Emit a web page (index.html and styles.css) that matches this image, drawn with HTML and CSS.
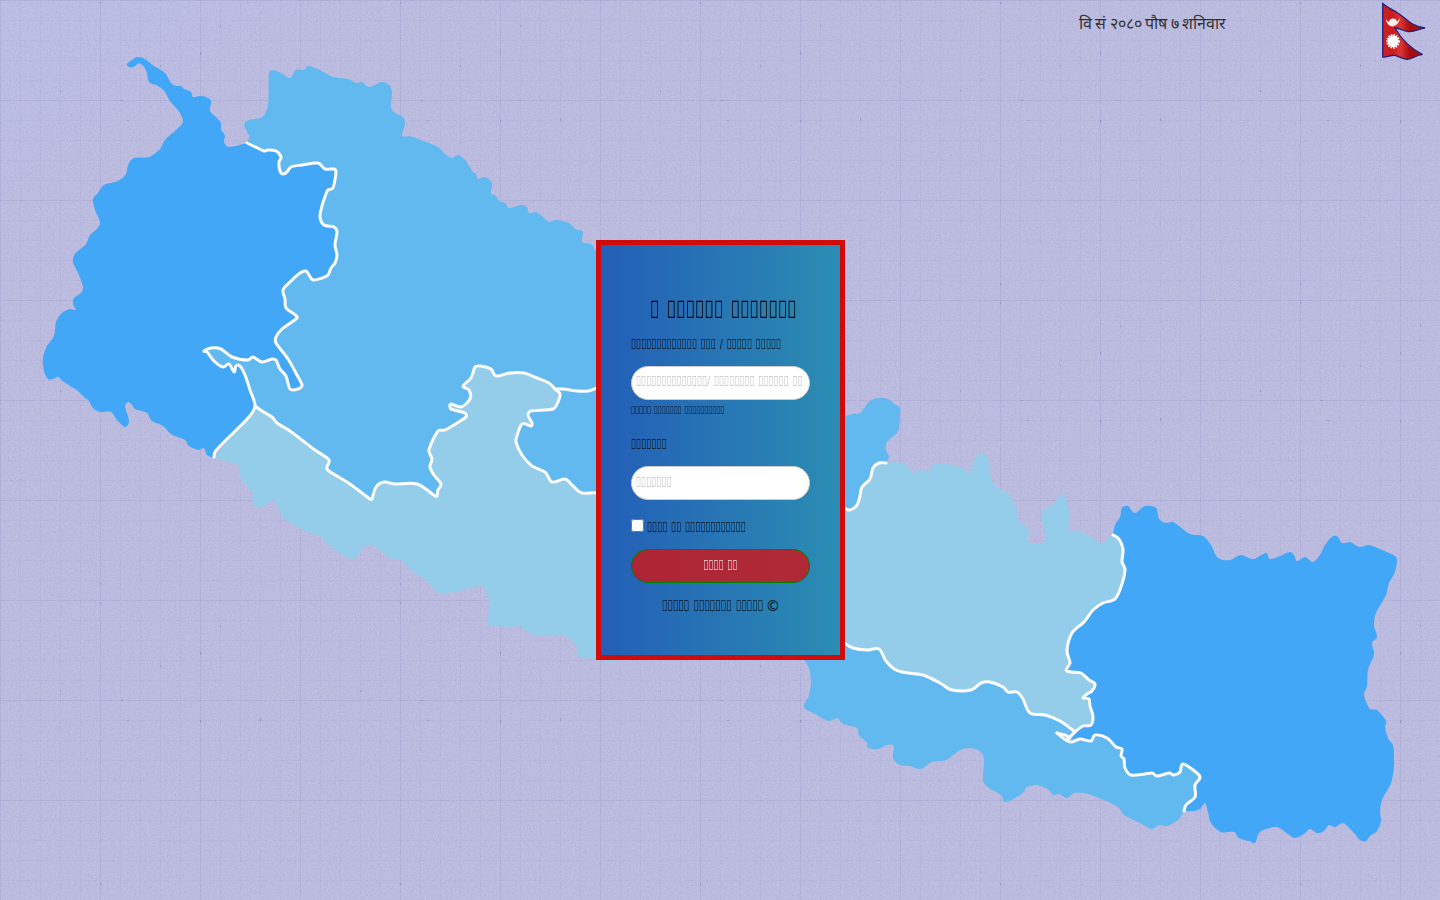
FILE: index.html
```html
<!DOCTYPE html>
<html>
<head>
<meta charset="utf-8">
<title>Login</title>
<link rel="stylesheet" href="styles.css">
</head>
<body>
<svg class="backdrop" width="1440" height="900" viewBox="0 0 1440 900" aria-hidden="true">
  <defs>
    <filter id="paper" x="0" y="0" width="100%" height="100%" color-interpolation-filters="sRGB">
      <feTurbulence type="fractalNoise" baseFrequency="0.6" numOctaves="2" seed="4" stitchTiles="stitch"/>
      <feColorMatrix values="0 0 0 0 .52  0 0 0 0 .52  0 0 0 0 .74  .36 0 0 0 -.12"/>
    </filter>
    <linearGradient id="tint" x1="0" y1="0" x2="1" y2="1">
      <stop offset="0" stop-color="#bfc1e5"/><stop offset=".15" stop-color="#bfbfe2"/><stop offset="1" stop-color="#bfbfe2"/>
    </linearGradient>
    <pattern id="grid" width="300" height="300" patternUnits="userSpaceOnUse">
      <path class="fine" d="M20.5 0V300M40.5 0V300M60.5 0V300M80.5 0V300M120.5 0V300M140.5 0V300M160.5 0V300M180.5 0V300M220.5 0V300M240.5 0V300M260.5 0V300M280.5 0V300M0 20.5H300M0 40.5H300M0 60.5H300M0 80.5H300M0 120.5H300M0 140.5H300M0 160.5H300M0 180.5H300M0 220.5H300M0 240.5H300M0 260.5H300M0 280.5H300"/>
      <path class="bold" d="M.5 0V300M100.5 0V300M200.5 0V300M0 .5H300M0 100.5H300M0 200.5H300"/>
      <path class="specks" d="M60.5 90v2M100.5 2v2M160.5 65v2M200.5 52v3M200.5 120v3M260.5 118v3M220.5 25v2M121 100.5h2M127 120.5h2M100.5 283v2"/>
    </pattern>
  </defs>
  <rect width="1440" height="900" fill="url(#tint)"/>
  <rect width="1440" height="900" filter="url(#paper)"/>
  <rect width="1440" height="900" fill="url(#grid)"/>
  <g id="map"></g>
</svg>

<header class="topbar">
  <time class="date">वि सं २०८० पौष ७ शनिवार</time>
  <svg class="flag" width="46" height="60" viewBox="0 0 46 60" role="img" aria-label="Nepal">
    <defs><linearGradient id="cloth"><stop offset="0" stop-color="#cf1f22"/><stop offset=".22" stop-color="#c51d20"/><stop offset=".42" stop-color="#dc3533"/><stop offset=".65" stop-color="#a50a0d"/><stop offset="1" stop-color="#b80d12"/></linearGradient></defs>
    <path d="M2.700 3.500C8 8 12 9.500 17 12.500C25 17 29 25.500 45 28C38 28.500 36 32 28 31.500C23 31 20 28 15 28C21 39 30 48 42.500 54.500C36 54.500 33 59.500 27 59.300C19 58 17 54.500 12 55.500C8 56 6 57.500 2.700 57Z" fill="url(#cloth)" stroke="#20207c" stroke-width="1.300"/>
    <path d="M6 19C7 29 18 29 20 18C18 21.500 16 23 13 23C10 23.500 8 22 6 19Z" fill="#f8f0f0"/>
    <path d="M8.500 23.500C8.500 17.500 17 16.500 17 22.500L13 25Z" fill="#f8f0f0"/>
    <ellipse cx="13" cy="41.300" rx="5.500" ry="6" fill="#fff"/>
    <ellipse cx="13" cy="41.300" rx="6" ry="6.600" fill="none" stroke="#fff" stroke-width="1.600" stroke-dasharray="1.500 1.200"/>
  </svg>
</header>

<main class="login">
  <h1 class="title"><span class="narrow">&#xE000; &#xE000;&#xE000;&#xE000;&#xE000;&#xE000;&#xE000; &#xE000;&#xE000;&#xE000;&#xE000;&#xE000;&#xE000;&#xE000;</span></h1>
  <div class="label"><span class="narrow">&#xE000;&#xE000;&#xE000;&#xE000;&#xE000;&#xE000;&#xE000;&#xE000;&#xE000;&#xE000;&#xE000;&#xE000;&#xE000; &#xE000;&#xE000;&#xE000; / &#xE000;&#xE000;&#xE000;&#xE000;&#xE000; &#xE000;&#xE000;&#xE000;&#xE000;&#xE000;</span></div>
  <div class="field user" role="textbox"><span class="narrow">&#xE000;&#xE000;&#xE000;&#xE000;&#xE000;&#xE000;&#xE000;&#xE000;&#xE000;&#xE000;&#xE000;&#xE000;&#xE000;&#xE000;/ &#xE000;&#xE000;&#xE000;&#xE000;&#xE000;&#xE000;&#xE000;&#xE000; &#xE000;&#xE000;&#xE000;&#xE000;&#xE000;&#xE000; &#xE000;&#xE000;</span></div>
  <div class="hint"><span class="narrow">&#xE000;&#xE000;&#xE000;&#xE000;&#xE000; &#xE000;&#xE000;&#xE000;&#xE000;&#xE000;&#xE000;&#xE000; &#xE000;&#xE000;&#xE000;&#xE000;&#xE000;&#xE000;&#xE000;&#xE000;&#xE000;&#xE000;</span></div>
  <div class="label second"><span class="narrow">&#xE000;&#xE000;&#xE000;&#xE000;&#xE000;&#xE000;&#xE000;</span></div>
  <div class="field" role="textbox"><span class="narrow">&#xE000;&#xE000;&#xE000;&#xE000;&#xE000;&#xE000;&#xE000;</span></div>
  <label class="remember"><input type="checkbox"><span class="narrow">&#xE000;&#xE000;&#xE000;&#xE000; &#xE000;&#xE000; &#xE000;&#xE000;&#xE000;&#xE000;&#xE000;&#xE000;&#xE000;&#xE000;&#xE000;&#xE000;&#xE000;&#xE000;</span></label>
  <button class="submit"><span class="narrow">&#xE000;&#xE000;&#xE000;&#xE000; &#xE000;&#xE000;</span></button>
  <footer class="credit"><span class="narrow">&#xE000;&#xE000;&#xE000;&#xE000;&#xE000; &#xE000;&#xE000;&#xE000;&#xE000;&#xE000;&#xE000;&#xE000; &#xE000;&#xE000;&#xE000;&#xE000;&#xE000;</span><span class="copy">©</span></footer>
</main>
<script src="map.js"></script>
</body>
</html>
```
FILE: styles.css
```css
* { box-sizing: border-box; }
body {
  margin: 0;
  width: 1440px;
  height: 900px;
  overflow: hidden;
  background: #bdbde0;
  font-family: "Noto Sans", sans-serif;
  font-size: 14px;
  color: #06101c;
}
.backdrop { position: absolute; top: 0; left: 0; z-index: -1; }
.fine, .bold, .specks { fill: none; stroke: #7573ad; }
.fine { opacity: .06; }
.bold { opacity: .15; }
.specks { opacity: .45; }
.border { fill: none; stroke: #fdfdff; stroke-width: 3; stroke-linejoin: round; stroke-linecap: round; }

.topbar { display: flex; justify-content: flex-end; align-items: flex-start; height: 240px; padding-right: 14px; }
.date { margin-top: 11px; margin-right: 154px; font-family: "Open Sans", sans-serif; font-size: 16px; line-height: 24px; word-spacing: -.7px; color: #333; white-space: nowrap; }
.flag { display: block; }

.login {
  width: 249px;
  height: 420px;
  margin-left: 596px;
  padding: 48px 30px 0;
  border: 5px solid #d10a0a;
  background: linear-gradient(to right, #235eb7, #2b8db2);
}
.narrow {
  display: inline-block;
  white-space: nowrap;
  transform: scaleX(.604);
  transform-origin: 0 50%;
  word-spacing: 2.6px;
}
.title { margin: 0 0 0 19px; font-size: 24px; font-weight: 400; line-height: 32px; height: 32px; color: #000; }
.title .narrow { transform: scaleX(.655); word-spacing: 5px; }
.label { height: 20px; line-height: 20px; margin-top: 9px; }
.field {
  height: 34px;
  margin-top: 12px;
  padding-left: 4px;
  border: 1px solid #ccc;
  border-radius: 17px;
  background: #fff;
  color: #c4c4c4;
  line-height: 29px;
  overflow: hidden;
}
.user { line-height: 28px; }
.hint { height: 16px; margin-top: 2px; font-size: 11px; line-height: 16px; }
.hint .narrow { transform: scaleX(.605); word-spacing: 1.6px; }
.second { margin-top: 16px; }
.remember { display: flex; height: 20px; margin-top: 17px; line-height: 20px; }
.remember input { width: 13px; height: 13px; margin: 2px 3px 0 0; }
.submit {
  display: block;
  width: 179px;
  height: 34px;
  margin-top: 12px;
  padding: 0 0 4px;
  border: 1px solid green;
  border-radius: 17px;
  background: rgba(190, 31, 40, .9);
  color: #f3dcdf;
  font: inherit;
}
.submit .narrow { transform-origin: 50% 50%; }
.credit { display: flex; height: 20px; margin: 13px 0 0 31px; font-size: 15px; line-height: 19px; }
.credit .narrow { width: 105px; word-spacing: 3.2px; transform: scaleX(.605); }
.copy { font-size: 14px; }
```
FILE: map.js
```js
// Province outlines as "x,y" vertices; paths are smoothed through each vertex.
const P = s => s.trim().split(/\s+/).map(p => p.split(",").map(Number));
const westCoast = P(`247,143 229,147 224,142 225,136 221,129 221,123 216,117 210,111 211,101 206,97 200,96 193,97 191,92 184,89 181,86 176,86 171,83 165,73 154,66 145,59 138,57 132,60 127,64 129,67 134,67 139,63 144,67 147,73 149,82 156,85 161,88 165,92 170,101 180,113 183,122 178,128 165,140 160,149 149,157 134,158 128,165 126,174 118,181 104,185 98,193 93,199 95,210 100,222 97,229 90,235 86,244 75,254 73,262 79,275 83,287 81,293 74,298 73,304 76,310 70,309 62,313 56,322 54,336 47,346 43,358 44,371 48,379 53,379 58,377 64,382 78,391 84,397 89,401 93,408 100,412 111,412 117,420 125,427 129,421 125,406 128,402 132,405 135,409 147,413 152,421 163,426 171,434 185,440 189,446 199,450 204,448 207,455 214,458`);
const westBorder = P(`214,457 215,452 222,444 248,418 255,406 250,390 245,375 240,366 236,366 234,372 229,364 223,367 214,361 207,352 204,351 211,348 221,349 232,357 248,360 253,357 262,362 272,359 276,360 280,369 286,376 290,389 298,389 302,385 297,375 288,359 276,343 276,337 282,329 297,318 294,314 286,308 285,299 283,290 290,282 300,273 306,271 309,275 313,280 322,278 328,275 331,268 335,263 337,255 335,245 337,232 334,227 324,225 320,217 322,206 326,194 328,190 333,188 336,172 334,169 325,169 318,163 302,165 291,167 287,172 283,174 280,171 279,162 281,157 276,151 268,150 264,151 247,143`);
const northWest = P(`247,143 249,136 244,125 249,120 262,117 268,105 269,72 273,70 281,73 290,78 296,70 304,70 308,66 320,70 333,77 348,79 356,83 362,82 369,87 382,82 389,85 392,92 391,107 395,113 403,117 405,124 402,136 409,136 421,140 438,147 445,154 452,158 458,155 465,160 473,172 476,174 478,179 485,177 492,183 491,193 496,196 499,201 505,203 509,208 521,205 527,207 529,213 536,212 543,217 549,222 556,220 569,223 575,229 583,232 582,242 591,244 595,250 610,270 610,520 340,520 240,420 195,345`);
const midBorder = P(`255,406 262,411 272,417 277,423 290,431 315,450 329,460 327,469 337,476 350,484 370,499 372,499 376,487 384,482 395,484 417,484 435,496 437,496 438,490 441,484 434,475 430,467 432,459 429,450 438,431 445,430 466,417 465,413 451,409 451,404 461,407 470,399 469,390 463,386 471,378 475,367 480,366 491,369 496,376 510,373 524,373 537,378 549,383 555,389 560,394 558,402 553,409 531,411 528,415 532,423 531,426 522,424 517,436 516,442 522,455 532,466 545,472 552,482 565,479 573,486 582,493 597,493 620,500`);
const spur = P(`555,389 563,389 578,391 588,391 597,388`);
const southWest = P(`620,657 590,658 583,658 578,655 576,646 564,635 540,636 527,632 520,626 510,627 488,624 490,608 487,594 481,586 463,590 446,593 437,592 428,582 415,573 400,560 389,558 380,550 372,545 364,547 354,559 345,556 331,547 318,535 307,532 282,517 280,510 273,500 266,505 258,507 252,500 253,493 241,478 239,467 236,464 214,458`);
const centreEast = P(`830,420 845,416 853,414 860,413 870,401 880,398 888,399 893,403 900,408 900,415 899,428 896,434 887,442 886,450 889,457 886,463 870,520 830,520`);
const centreBorder = P(`886,463 879,463 873,468 870,479 862,487 860,496 857,505 850,510 844,508`);
const northEast = P(`886,463 903,463 913,472 923,469 928,473 933,465 945,463 958,467 967,470 969,476 973,465 978,455 985,454 989,463 991,477 996,487 1003,490 1010,496 1017,511 1019,521 1029,529 1030,533 1027,540 1036,544 1044,542 1046,537 1043,526 1042,511 1053,505 1061,494 1065,498 1069,510 1069,530 1077,531 1091,537 1102,544 1107,538 1113,535`);
const eastBorder = P(`1113,535 1119,539 1123,549 1122,562 1125,569 1122,584 1115,599 1103,603 1093,610 1084,622 1072,633 1067,651 1070,663 1066,670 1071,672 1081,673 1089,680 1095,684 1092,691 1087,694 1083,698 1089,699 1090,706 1093,716 1091,725 1083,726 1075,732 1068,739`);
const southBorder = P(`844,643 853,648 867,650 879,649 886,661 896,670 908,673 923,675 940,683 952,690 971,690 981,683 990,682 1003,687 1008,692 1017,692 1023,699 1030,713 1045,715 1060,721 1074,731`);
const southEastBorder = P(`1057,733 1063,738 1071,742 1080,739 1091,741 1095,735 1107,738 1116,747 1122,749 1121,756 1124,759 1125,768 1131,775 1145,774 1152,773 1157,776 1169,773 1174,775 1180,772 1183,764 1197,773 1200,778 1195,785 1195,797 1186,805 1184,811`);
const lobe = P(`1057,733 1065,735 1070,738`);
const southEast = P(`830,640 800,650 804,660 809,668 811,682 809,695 804,707 813,713 829,721 837,718 843,724 857,728 859,735 867,743 868,748 878,749 887,745 894,746 893,758 900,765 910,766 921,769 932,762 946,760 960,750 969,748 980,751 984,759 983,781 989,788 1001,795 1005,802 1015,798 1023,793 1027,787 1037,785 1049,790 1053,795 1059,794 1067,798 1074,793 1084,793 1099,798 1118,807 1124,815 1140,823 1152,829 1159,825 1167,826 1178,820 1184,811`);
const eastCoast = P(`1113,535 1115,525 1120,517 1122,508 1128,506 1135,513 1145,506 1156,508 1159,519 1166,523 1173,522 1190,534 1203,536 1211,545 1218,558 1230,560 1241,555 1253,559 1266,553 1270,559 1280,556 1290,552 1294,555 1297,561 1305,557 1313,562 1320,555 1325,545 1333,536 1338,537 1342,543 1350,542 1359,547 1369,545 1382,550 1395,556 1397,560 1395,572 1389,583 1386,595 1376,613 1374,625 1377,637 1372,643 1374,654 1368,670 1367,686 1364,695 1370,709 1377,710 1386,721 1385,728 1389,740 1393,745 1394,765 1391,783 1382,800 1380,812 1381,821 1377,831 1370,836 1366,841 1360,840 1354,833 1343,823 1335,827 1329,825 1324,831 1317,833 1310,829 1304,834 1295,838 1288,834 1277,827 1266,829 1259,833 1255,843 1249,841 1239,838 1234,832 1221,832 1211,823 1208,812 1205,803 1200,809 1193,811 1184,811`);

function curve(pts) {
  let d = "M" + pts[0];
  for (let i = 0; i < pts.length - 1; i++) {
    const a = pts[i - 1] || pts[i], b = pts[i], c = pts[i + 1], e = pts[i + 2] || c;
    const len = Math.hypot(c[0] - b[0], c[1] - b[1]);
    const handle = (u, v) => {
      const n = Math.hypot(v[0] - u[0], v[1] - u[1]) || 1;
      const k = Math.min(len * .33, n / 6);
      return [(v[0] - u[0]) / n * k, (v[1] - u[1]) / n * k];
    };
    const h1 = handle(a, c), h2 = handle(b, e);
    d += `C${b[0] + h1[0]} ${b[1] + h1[1]} ${c[0] - h2[0]} ${c[1] - h2[1]} ${c[0]} ${c[1]}`;
  }
  return d;
}
const map = document.getElementById("map");
function draw(pts, fill) {
  const path = document.createElementNS("http://www.w3.org/2000/svg", "path");
  path.setAttribute("d", curve(pts) + (fill ? "Z" : ""));
  if (fill) path.setAttribute("fill", fill); else path.setAttribute("class", "border");
  map.append(path);
}
const dark = "#41a7f6", mid = "#62b9ef", light = "#93cdea";
const rev = a => [...a].reverse();
draw(northWest, mid);
draw([...midBorder, ...southWest], light);
draw([...westCoast, ...westBorder], dark);
draw(centreEast, mid);
draw([...southEast, ...rev(southEastBorder), [1074, 700], [844, 630]], mid);
draw([[1054, 735], [1060, 715], [1082, 725], [1072, 742]], mid);
draw([...northEast, ...eastBorder.slice(0, -1), ...rev(southBorder), [830, 630], [830, 508], ...rev(centreBorder)], light);
draw([...eastCoast, ...rev(southEastBorder).slice(0, -3), [1068, 739], ...rev(eastBorder)], dark);
[westBorder, midBorder, spur, centreBorder, eastBorder, southBorder, southEastBorder, lobe].forEach(l => draw(l));
```
